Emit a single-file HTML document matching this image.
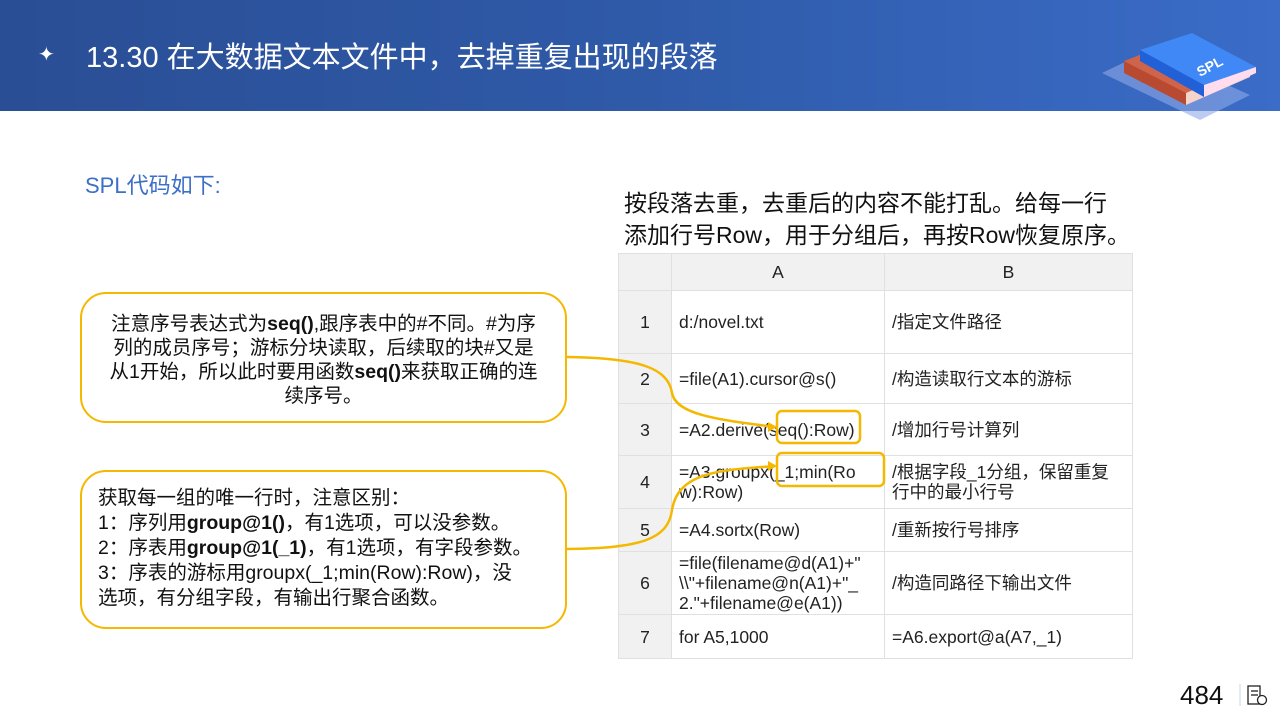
<!DOCTYPE html>
<html><head><meta charset="utf-8"><style>
*{margin:0;padding:0;box-sizing:border-box}
body{width:1280px;height:720px;position:relative;overflow:hidden;background:#fff;font-family:"Liberation Sans","Noto Sans CJK SC",sans-serif;color:#222}
.hdr{position:absolute;left:0;top:0;width:1280px;height:111px;background:linear-gradient(90deg,#2a4e95 0%,#2f5aa8 50%,#3a6cc8 100%)}
.title{position:absolute;left:86px;top:34px;color:#fff;font-size:29px;white-space:nowrap}
.star{position:absolute;left:38px;top:42px;color:#fff;font-size:20px}
.sub{position:absolute;left:85px;top:168px;color:#3b6fc8;font-size:22px}
.note{position:absolute;left:624px;top:187px;font-size:23px;line-height:32px;color:#111;white-space:nowrap}
table{position:absolute;left:618px;top:253px;width:514px;border-collapse:collapse;table-layout:fixed;font-size:17.5px}
td{border:1px solid #e0e0e0;padding:0 7px;vertical-align:middle;line-height:20px;word-break:break-all;overflow:hidden;white-space:nowrap}
td.w{white-space:normal}
td.n{background:#f1f1f1;text-align:center}
tr.h td{background:#f1f1f1;text-align:center}
.box{position:absolute;left:80px;width:487px;border:2px solid #f5b800;border-radius:26px;font-size:19.5px;line-height:24px;color:#111;white-space:nowrap}
.pg{position:absolute;left:1180px;top:680px;font-size:26px;color:#111}
</style></head><body>
<div class="hdr"></div>
<div class="star">✦</div>
<div class="title">13.30 在大数据文本文件中，去掉重复出现的段落</div>
<svg style="position:absolute;left:1100px;top:15px" width="160" height="110" viewBox="0 0 160 110">
<polygon points="2,58 50,35 150,80 100,105" fill="#8fa8e6" opacity="0.6"/>
<polygon points="24,46 88,22 150,60 86,90" fill="#d0644a"/>
<polygon points="24,46 86,78 86,90 24,58" fill="#b84a32"/>
<polygon points="86,78 150,50 150,62 86,90" fill="#f6d4cc"/>
<polygon points="40,35 92,18 156,52 104,82" fill="#3f88f5"/>
<polygon points="40,35 104,70 104,82 40,46" fill="#2260d8"/>
<polygon points="104,70 156,52 156,58 104,82" fill="#fde"/>
<text x="100" y="62" fill="#fff" font-size="14" font-weight="bold" transform="rotate(-28 100 62)" font-family="Liberation Sans">SPL</text>
</svg>
<div class="sub">SPL代码如下:</div>
<div class="note">按段落去重，去重后的内容不能打乱。给每一行<br>添加行号Row，用于分组后，再按Row恢复原序。</div>
<table>
<colgroup><col style="width:53px"><col style="width:213px"><col style="width:248px"></colgroup>
<tr class="h" style="height:37px"><td class="n"></td><td>A</td><td>B</td></tr>
<tr style="height:63px"><td class="n">1</td><td>d:/novel.txt</td><td>/指定文件路径</td></tr>
<tr style="height:50px"><td class="n">2</td><td>=file(A1).cursor@s()</td><td>/构造读取行文本的游标</td></tr>
<tr style="height:52px"><td class="n">3</td><td>=A2.derive(seq():Row)</td><td>/增加行号计算列</td></tr>
<tr style="height:53px"><td class="n">4</td><td>=A3.groupx(_1;min(Ro<br>w):Row)</td><td class="w">/根据字段_1分组，保留重复行中的最小行号</td></tr>
<tr style="height:43px"><td class="n">5</td><td>=A4.sortx(Row)</td><td>/重新按行号排序</td></tr>
<tr style="height:63px"><td class="n">6</td><td>=file(filename@d(A1)+"<br>\\"+filename@n(A1)+"_<br>2."+filename@e(A1))</td><td>/构造同路径下输出文件</td></tr>
<tr style="height:44px"><td class="n">7</td><td>for A5,1000</td><td>=A6.export@a(A7,_1)</td></tr>
</table>
<div class="box" style="top:292px;height:131px;padding:18px 0 0 0;text-align:center">注意序号表达式为<b>seq()</b>,跟序表中的#不同。#为序<br>列的成员序号；游标分块读取，后续取的块#又是<br>从1开始，所以此时要用函数<b>seq()</b>来获取正确的连<br>续序号。</div>
<div class="box" style="top:470px;height:159px;padding:14px 16px 0 16px;line-height:25px">获取每一组的唯一行时，注意区别：<br>1：序列用<b>group@1()</b>，有1选项，可以没参数。<br>2：序表用<b>group@1(_1)</b>，有1选项，有字段参数。<br>3：序表的游标用groupx(_1;min(Row):Row)，没<br>选项，有分组字段，有输出行聚合函数。</div>
<svg style="position:absolute;left:0;top:0" width="1280" height="720">
<g fill="none" stroke="#f5b800" stroke-width="2.5">
<path d="M567,357 C640,358 668,368 672,393 C676,415 720,420 775,427"/>
<path d="M567,549 C640,548 668,540 672,510 C678,472 720,470 775,466"/>
<rect x="777" y="411" width="83" height="32" rx="5"/>
<rect x="777" y="453" width="107" height="33" rx="5"/>
</g>
<polygon points="777,427 768,422 768,432" fill="#f5b800"/>
<polygon points="777,466 768,461 768,471" fill="#f5b800"/>
<line x1="1240" y1="684" x2="1240" y2="706" stroke="#c8d4ea"/>
<g fill="none" stroke="#222" stroke-width="1.3"><rect x="1248" y="686" width="12" height="18"/><line x1="1251" y1="691" x2="1258" y2="691"/><line x1="1251" y1="695" x2="1258" y2="695"/><circle cx="1262" cy="700" r="4.5" fill="#fff"/></g>
</svg>
<div class="pg">484</div>
</body></html>
